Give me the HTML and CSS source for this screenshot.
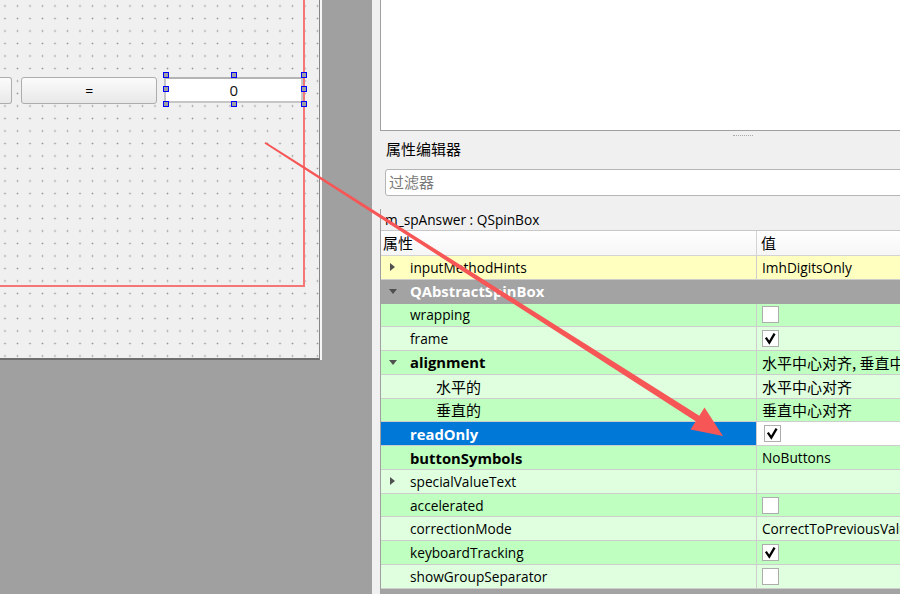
FILE: index.html
```html
<!DOCTYPE html>
<html>
<head>
<meta charset="utf-8">
<link rel="stylesheet" href="styles.css">
</head>
<body>
<div class="app">
  <section class="designer">
    <div class="form-frame">
      <div class="form">
        <div class="layout">
          <div class="widgets">
            <div class="btn-cut"></div>
            <div class="btn-eq">=</div>
            <div class="spin">0
              <span class="h h-l h-t"></span><span class="h h-m h-t"></span><span class="h h-r h-t"></span>
              <span class="h h-l h-c"></span><span class="h h-r h-c"></span>
              <span class="h h-l h-b"></span><span class="h h-m h-b"></span><span class="h h-r h-b"></span>
            </div>
          </div>
        </div>
      </div>
    </div>
  </section>
  <section class="panel">
    <div class="col">
      <div class="topbox"></div>
      <div class="splitter"><span class="grip"></span></div>
      <div class="title">属性编辑器</div>
      <div class="filter">过滤器</div>
      <div class="tree-frame">
        <div class="objname">m_spAnswer : QSpinBox</div>
        <div class="tree">
          <div class="header"><div class="hc1 zh">属性</div><div class="hc2 zh">值</div></div>
          <div class="row yellow"><div class="c1"><span class="exp"><i class="tri-r"></i></span>inputMethodHints</div><div class="c2">ImhDigitsOnly</div></div>
          <div class="row grp"><div class="gc"><span class="exp"><i class="tri-d"></i></span><span class="b">QAbstractSpinBox</span></div></div>
          <div class="row g"><div class="c1"><span class="exp"></span>wrapping</div><div class="c2"><span class="cb"></span></div></div>
          <div class="row lg"><div class="c1"><span class="exp"></span>frame</div><div class="c2"><span class="cb"><svg viewBox="0 0 15 15"><path d="M3.5 7.6 L6.3 11.6 L11 3.6"/></svg></span></div></div>
          <div class="row g"><div class="c1"><span class="exp"><i class="tri-d"></i></span><span class="b">alignment</span></div><div class="c2 zh">水平中心对齐, 垂直中心对齐</div></div>
          <div class="row lg"><div class="c1"><span class="exp"></span><span class="sub zh">水平的</span></div><div class="c2 zh">水平中心对齐</div></div>
          <div class="row g"><div class="c1"><span class="exp"></span><span class="sub zh">垂直的</span></div><div class="c2 zh">垂直中心对齐</div></div>
          <div class="row sel"><div class="c1"><span class="exp"></span><span class="b">readOnly</span></div><div class="c2"><span class="cb"><svg viewBox="0 0 15 15"><path d="M3.5 7.6 L6.3 11.6 L11 3.6"/></svg></span></div></div>
          <div class="row g"><div class="c1"><span class="exp"></span><span class="b">buttonSymbols</span></div><div class="c2">NoButtons</div></div>
          <div class="row lg"><div class="c1"><span class="exp"><i class="tri-r"></i></span>specialValueText</div><div class="c2"></div></div>
          <div class="row g"><div class="c1"><span class="exp"></span>accelerated</div><div class="c2"><span class="cb"></span></div></div>
          <div class="row lg"><div class="c1"><span class="exp"></span>correctionMode</div><div class="c2">CorrectToPreviousValue</div></div>
          <div class="row g"><div class="c1"><span class="exp"></span>keyboardTracking</div><div class="c2"><span class="cb"><svg viewBox="0 0 15 15"><path d="M3.5 7.6 L6.3 11.6 L11 3.6"/></svg></span></div></div>
          <div class="row lg"><div class="c1"><span class="exp"></span>showGroupSeparator</div><div class="c2"><span class="cb"></span></div></div>
          <div class="row grp"><div class="gc"></div></div>
        </div>
      </div>
    </div>
  </section>
</div>
<svg class="arrow" viewBox="0 0 900 594" width="900" height="594">
  <polygon points="265.5,141.9 699.3,415.7 704.5,407.6 723,436 690.5,429.4 695.7,421.3 264.5,143.5"/>
</svg>
</body>
</html>
```

FILE: styles.css
```css
html, body {
  margin: 0;
  padding: 0;
}
body {
  width: 900px;
  height: 594px;
  overflow: hidden;
  position: relative;
  background: #a0a0a0;
  font-family: "Open Sans", "Noto Sans CJK SC", sans-serif;
  font-size: 13.7px;
  color: #000;
}
.zh {
  font-family: "Noto Sans CJK SC", sans-serif;
  font-size: 15px;
}
.app {
  display: flex;
  height: 594px;
}

/* ---------- designer canvas ---------- */
.designer {
  width: 372px;
  flex: none;
}
.form-frame {
  width: 320px;
  border-right: 2px solid #f6f6f6;
}
.form {
  width: 319px;
  height: 358px;
  background-color: #f0f0f0;
  background-image: radial-gradient(circle at center, #979797 0.7px, rgba(240,240,240,0) 1.1px);
  background-size: 12.5px 12.5px;
  background-position: -1.25px -0.25px;
  border-right: 1px solid #858585;
  border-bottom: 2px solid #6e6e6e;
}
.layout {
  width: 303px;
  height: 285px;
  border-right: 2px solid #f57676;
  border-bottom: 2px solid #f57676;
}
.widgets {
  display: flex;
  align-items: flex-start;
  padding-top: 77px;
}
.btn-cut {
  width: 12px;
  height: 27px;
  box-sizing: border-box;
  border: 1px solid #adadad;
  border-left: none;
  border-radius: 0 3px 3px 0;
  background: linear-gradient(#fbfbfb, #e9e9e9);
}
.btn-eq {
  margin-left: 9px;
  width: 137px;
  height: 27px;
  box-sizing: border-box;
  border: 1px solid #adadad;
  border-radius: 3px;
  background: linear-gradient(#fbfbfb, #e8e8e8);
  display: flex;
  align-items: center;
  justify-content: center;
  font-size: 14px;
}
.spin {
  margin-left: 7px;
  width: 139px;
  height: 26px;
  box-sizing: border-box;
  border: 2px solid #c6c6c6;
  border-top-color: #b4b4b4;
  background: #fff;
  position: relative;
  display: flex;
  align-items: center;
  justify-content: center;
  font-size: 15px;
  color: #111;
}
.h {
  position: absolute;
  width: 6px;
  height: 6px;
  box-sizing: border-box;
  background: #a0a0a0;
  border: 1px solid #0000ff;
}
.h-l { left: -3.7px; }
.h-m { left: 64.7px; }
.h-r { left: 134.7px; }
.h-t { top: -6.7px; }
.h-c { top: 7px; }
.h-b { top: 22.3px; }

/* ---------- property panel ---------- */
.panel {
  flex: none;
  width: 528px;
  background: #f0f0f0;
  overflow: hidden;
  padding-left: 8px;
  box-sizing: border-box;
  position: relative;
}
.col {
  width: 560px;
}
.topbox {
  height: 130px;
  background: #fff;
  border-left: 1px solid #a0a0a0;
  border-bottom: 1px solid #a0a0a0;
}
.splitter {
  height: 8px;
  display: flex;
  align-items: center;
  padding-left: 353px;
}
.grip {
  width: 20px;
  height: 0;
  border-top: 1px dotted #a8a8a8;
}
.title {
  height: 20px;
  padding-bottom: 2px;
  line-height: 20px;
  padding-left: 6px;
  font-family: "Noto Sans CJK SC", sans-serif;
  font-size: 15px;
}
.filter {
  margin: 8px 0 0 5px;
  height: 27px;
  box-sizing: border-box;
  border: 1px solid #b5b5b5;
  border-radius: 3px;
  background: #fff;
  padding-left: 3px;
  color: #7a7a7a;
  font-family: "Noto Sans CJK SC", sans-serif;
  font-size: 15px;
  line-height: 24px;
}
.tree-frame {
  margin-top: 13px;
  border-left: 1px solid #a0a0a0;
}
.objname {
  height: 21px;
  line-height: 21px;
  padding-left: 4px;
}
.tree {
  border-top: 1px solid #c8c8c8;
}
.header {
  display: flex;
  height: 25px;
  box-sizing: border-box;
  border-bottom: 1px solid #d4d4d4;
  background: linear-gradient(#ffffff, #f6f6f6);
}
.hc1 {
  width: 376px;
  box-sizing: border-box;
  border-right: 1px solid #d4d4d4;
  padding-left: 2px;
  line-height: 24px;
}
.hc2 {
  padding-left: 4px;
  line-height: 24px;
}
.row {
  display: flex;
  height: 23.77px;
  box-sizing: border-box;
  border-bottom: 1px solid #cdcdcd;
}
.c1 {
  width: 376px;
  flex: none;
  box-sizing: border-box;
  border-right: 1px solid #cdcdcd;
  display: flex;
  align-items: center;
  white-space: nowrap;
}
.c2 {
  flex: 1;
  display: flex;
  align-items: center;
  padding-left: 5px;
  white-space: nowrap;
  overflow: hidden;
}
.gc {
  flex: 1;
  display: flex;
  align-items: center;
}
.exp {
  width: 29px;
  flex: none;
  display: flex;
  align-items: center;
  padding-left: 8px;
  box-sizing: border-box;
}
.tri-r {
  width: 0;
  height: 0;
  margin-left: 1px;
  border-left: 5px solid #505050;
  border-top: 4.5px solid transparent;
  border-bottom: 4.5px solid transparent;
}
.tri-d {
  width: 0;
  height: 0;
  border-top: 5px solid #505050;
  border-left: 4.5px solid transparent;
  border-right: 4.5px solid transparent;
}
.sub {
  padding-left: 26px;
}
.b {
  font-weight: 700;
  font-size: 14.8px;
}
.yellow { background: #ffffbf; }
.g { background: #bfffbf; }
.lg { background: #dfffdf; }
.grp {
  background: #a3a3a3;
  color: #fff;
  border-bottom-color: #a3a3a3;
}
.grp .tri-d { border-top-color: #4e4e4e; }
.sel .c1 {
  background: #0078d7;
  color: #fff;
}
.sel .c2 {
  background: #fff;
  padding-left: 7px;
}
.cb {
  width: 17px;
  height: 17px;
  box-sizing: border-box;
  border: 1px solid #adadad;
  background: #fff;
  display: block;
}
.cb svg {
  display: block;
  width: 15px;
  height: 15px;
}
.cb path {
  fill: none;
  stroke: #000;
  stroke-width: 2.3;
  stroke-linecap: square;
  stroke-linejoin: miter;
}

/* ---------- annotation arrow ---------- */
.arrow {
  position: absolute;
  left: 0;
  top: 0;
  pointer-events: none;
}
.arrow polygon {
  fill: #f65656;
}
```
